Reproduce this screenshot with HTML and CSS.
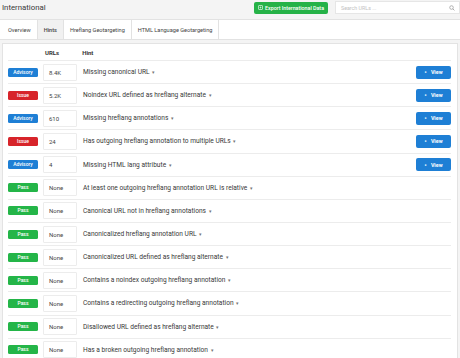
FILE: index.html
```html
<!DOCTYPE html>
<html lang="en">
<head>
    <meta charset="UTF-8">
    <title>International</title>
    <link rel="stylesheet" href="styles.css">
</head>
<body>

    <div class="topbar">
        <h1 class="title">International</h1>
        <button class="export">
            <svg class="export-icon" viewBox="0 0 10 10"><rect x="1" y="1" width="8" height="8" rx="1" fill="none" stroke="#fff" stroke-width="1.2"/><path d="M3 5h4M5 3v4" stroke="#fff" stroke-width="1"/></svg>
            Export International Data
        </button>
        <div class="search">
            <span class="placeholder">Search URLs ...</span>
            <svg class="search-icon" viewBox="0 0 10 10"><circle cx="4.2" cy="4.2" r="3" fill="none" stroke="#888" stroke-width="1"/><path d="M6.4 6.4L9 9" stroke="#888" stroke-width="1.2"/></svg>
        </div>
    </div>

    <div class="tabs">
        <div class="tab">Overview</div>
        <div class="tab active">Hints</div>
        <div class="tab">Hreflang Geotargeting</div>
        <div class="tab">HTML Language Geotargeting</div>
    </div>

    <div class="panel">
        <div class="thead">
            <span class="col-urls">URLs</span>
            <span class="col-hint">Hint</span>
        </div>

        <div class="row">
            <span class="badge advisory">Advisory</span>
            <span class="count">8.4K</span>
            <span class="hint">Missing canonical URL <span class="caret">▾</span></span>
            <button class="view"><span class="eye">●</span> View</button>
        </div>
        <div class="row">
            <span class="badge issue">Issue</span>
            <span class="count">5.2K</span>
            <span class="hint">Noindex URL defined as hreflang alternate <span class="caret">▾</span></span>
            <button class="view"><span class="eye">●</span> View</button>
        </div>
        <div class="row">
            <span class="badge advisory">Advisory</span>
            <span class="count">610</span>
            <span class="hint">Missing hreflang annotations <span class="caret">▾</span></span>
            <button class="view"><span class="eye">●</span> View</button>
        </div>
        <div class="row">
            <span class="badge issue">Issue</span>
            <span class="count">24</span>
            <span class="hint">Has outgoing hreflang annotation to multiple URLs <span class="caret">▾</span></span>
            <button class="view"><span class="eye">●</span> View</button>
        </div>
        <div class="row">
            <span class="badge advisory">Advisory</span>
            <span class="count">4</span>
            <span class="hint">Missing HTML lang attribute <span class="caret">▾</span></span>
            <button class="view"><span class="eye">●</span> View</button>
        </div>
        <div class="row">
            <span class="badge pass">Pass</span>
            <span class="count">None</span>
            <span class="hint">At least one outgoing hreflang annotation URL is relative <span class="caret">▾</span></span>
        </div>
        <div class="row">
            <span class="badge pass">Pass</span>
            <span class="count">None</span>
            <span class="hint">Canonical URL not in hreflang annotations <span class="caret">▾</span></span>
        </div>
        <div class="row">
            <span class="badge pass">Pass</span>
            <span class="count">None</span>
            <span class="hint">Canonicalized hreflang annotation URL <span class="caret">▾</span></span>
        </div>
        <div class="row">
            <span class="badge pass">Pass</span>
            <span class="count">None</span>
            <span class="hint">Canonicalized URL defined as hreflang alternate <span class="caret">▾</span></span>
        </div>
        <div class="row">
            <span class="badge pass">Pass</span>
            <span class="count">None</span>
            <span class="hint">Contains a noindex outgoing hreflang annotation <span class="caret">▾</span></span>
        </div>
        <div class="row">
            <span class="badge pass">Pass</span>
            <span class="count">None</span>
            <span class="hint">Contains a redirecting outgoing hreflang annotation <span class="caret">▾</span></span>
        </div>
        <div class="row">
            <span class="badge pass">Pass</span>
            <span class="count">None</span>
            <span class="hint">Disallowed URL defined as hreflang alternate <span class="caret">▾</span></span>
        </div>
        <div class="row">
            <span class="badge pass">Pass</span>
            <span class="count">None</span>
            <span class="hint">Has a broken outgoing hreflang annotation <span class="caret">▾</span></span>
        </div>
    </div>

</body>
</html>
```

FILE: styles.css
```css
/* General Styles */
body {
    margin: 0;
    font-family: Roboto, 'Liberation Sans', sans-serif;
    background-color: #f4f4f4;
    color: #333;
    overflow: hidden;
}

/* Top bar */
.topbar {
    display: flex;
    align-items: center;
    height: 15px;
    padding-left: 2px;
}

.title {
    flex: 1;
    margin: 0;
    font-size: 7.8px;
    font-weight: normal;
    color: #3a3a3a;
}

.export {
    display: flex;
    align-items: center;
    gap: 2px;
    height: 12px;
    padding: 0 4px;
    margin-right: 7px;
    border: none;
    border-radius: 2px;
    background-color: #25b247;
    color: #fff;
    font-family: inherit;
    font-size: 5.3px;
    font-weight: 500;
}

.export-icon {
    width: 5px;
    height: 5px;
}

.search {
    display: flex;
    align-items: center;
    justify-content: space-between;
    width: 125px;
    height: 13px;
    box-sizing: border-box;
    padding: 0 4px 0 5px;
    background-color: #fff;
    border: 1px solid #e6e6e6;
}

.placeholder {
    font-size: 5.3px;
    color: #c2c2c2;
}

.search-icon {
    width: 6px;
    height: 6px;
}

/* Tabs */
.tabs {
    display: flex;
    height: 19px;
    margin-top: 4px;
    background-color: #fff;
    border-top: 1px solid #e2e2e2;
    border-bottom: 1px solid #e2e2e2;
    padding-left: 2px;
}

.tab {
    display: flex;
    align-items: center;
    padding: 0 6px;
    font-size: 5.6px;
    color: #444;
    border-right: 1px solid #e2e2e2;
}

.tab.active {
    background-color: #f1f1f1;
    font-weight: 500;
}

/* Panel */
.panel {
    margin: 3px 2px 0 2px;
    background-color: #fff;
    border: 1px solid #e3e3e3;
    padding: 0 6px 0 5px;
}

.thead {
    display: flex;
    align-items: center;
    height: 16px;
    font-size: 6px;
    font-weight: bold;
    color: #333;
}

.col-urls {
    margin-left: 37px;
}

.col-hint {
    margin-left: 23px;
}

.row {
    display: flex;
    align-items: center;
    height: 23.15px;
    box-sizing: border-box;
    border-top: 1px solid #ececec;
}

.badge {
    width: 30px;
    height: 9px;
    line-height: 9px;
    border-radius: 1.5px;
    text-align: center;
    font-size: 5px;
    font-weight: 500;
    color: #fff;
}

.advisory { background-color: #1e7fd5; }
.issue { background-color: #d7242a; }
.pass { background-color: #24b548; }

.count {
    width: 34px;
    height: 17px;
    box-sizing: border-box;
    margin-left: 5px;
    padding-left: 5px;
    line-height: 16px;
    border: 1px solid #ececec;
    border-radius: 1px;
    font-size: 6px;
    color: #444;
}

.hint {
    flex: 1;
    margin-left: 6px;
    font-size: 6.6px;
    color: #383838;
}

.caret {
    font-size: 5px;
    color: #777;
    margin-left: 1px;
}

.view {
    width: 35px;
    height: 13px;
    border: none;
    border-radius: 2px;
    background-color: #1e7fd5;
    color: #fff;
    font-family: inherit;
    font-size: 5.3px;
    font-weight: bold;
    padding: 0;
}

.eye {
    font-size: 3.5px;
    margin-right: 3px;
    vertical-align: 1px;
}
```
